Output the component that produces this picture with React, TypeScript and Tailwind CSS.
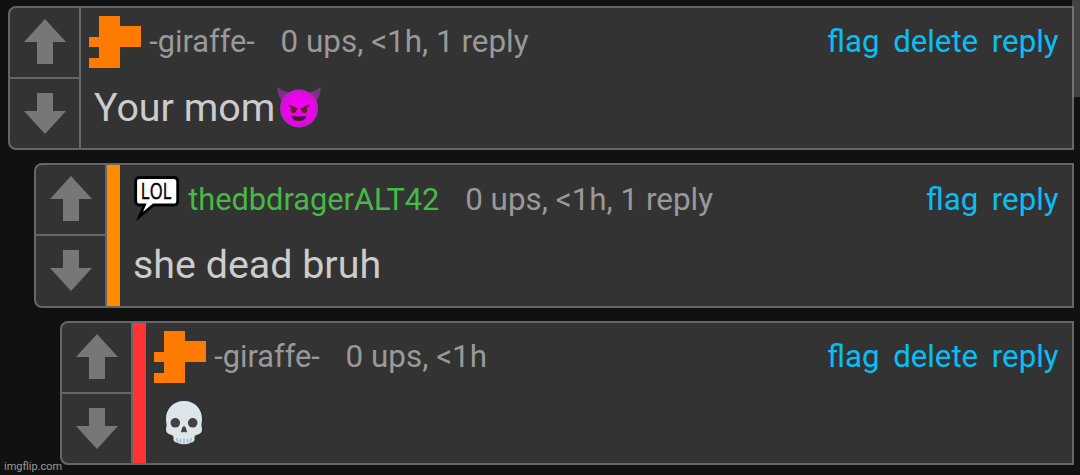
import type { ReactNode } from "react";

interface CommentProps {
    card: string;
    stripe?: string;
    icon: ReactNode;
    name: string;
    nameStyle: string;
    stats: string;
    actions: string[];
    headerPad?: string;
    children: ReactNode;
}

function GiraffeIcon() {
    return (
        <svg width="52" height="52" viewBox="0 0 52 52" shapeRendering="crispEdges" className="shrink-0">
            <path d="M10 0H31V10H52V31H31V52H0V42H10V31H0V21H10Z" fill="#ff7a00" />
        </svg>
    );
}

function LolIcon() {
    return (
        <svg width="52" height="52" viewBox="0 0 52 52" className="shrink-0 overflow-visible">
            <path
                d="M12 4.500H45.500Q49.700 4.500 49.700 8.500V28Q49.700 32 45.500 32H25.500L11.500 43.500L16.500 32H12Q7.700 32 7.700 28V8.500Q7.700 4.500 12 4.500Z"
                fill="#fff"
                stroke="#000"
                strokeWidth="2.800"
                strokeMiterlimit="8"
            />
            <text
                transform="translate(12.800 26.300) scale(0.740 1)"
                fontSize="22.500"
                letterSpacing="0.300"
                fontFamily="Open Sans, sans-serif"
                fill="#000"
                stroke="#000"
                strokeWidth="0.500"
            >
                LOL
            </text>
        </svg>
    );
}

function ImpIcon() {
    return (
        <svg width="44" height="44" viewBox="0 0 44 44" className="shrink-0">
            <defs>
                <radialGradient id="imp">
                    <stop offset="0.65" stopColor="#ef00ee" />
                    <stop offset="1" stopColor="#c21bca" />
                </radialGradient>
            </defs>
            <path d="M0.500 0.500Q4 5 12 6.500L6 17Q-0.500 9 0.500 0.500ZM43.500 0.500Q40 5 32 6.500L38 17Q44.500 9 43.500 0.500Z" fill="#7b3188" />
            <circle cx="22" cy="22.500" r="19" fill="url(#imp)" />
            <path d="M12 19.500L19.500 23M32 19.500L24.500 23" stroke="#4a1630" strokeWidth="1.800" strokeLinecap="round" />
            <circle cx="16.500" cy="24" r="2.900" fill="#5a2a18" />
            <circle cx="27.500" cy="24" r="2.900" fill="#5a2a18" />
            <path d="M14.500 29.800Q22 31 29.500 29.800Q28.500 35 22 35Q15.500 35 14.500 29.800Z" fill="#4a1630" />
        </svg>
    );
}

function SkullIcon() {
    return (
        <svg width="36" height="44" viewBox="0 0 36 44" className="shrink-0">
            <path
                d="M18 0C7 0 0 8 0 18C0 21 0.800 23 0.500 25C-0.300 28 -0.300 31 2 32.500C4 34 7 33.500 7.500 36V39Q8 41 10.500 41.500Q14 43.500 18 43.200Q22 43.500 25.500 41.500Q28 41 28.500 39V36C29 33.500 32 34 34 32.500C36.300 31 36.300 28 35.500 25C35.200 23 36 21 36 18C36 8 29 0 18 0Z"
                fill="#dce5ea"
            />
            <circle cx="9.300" cy="21.800" r="4.800" fill="#424242" />
            <circle cx="26.700" cy="21.800" r="4.800" fill="#424242" />
            <path d="M18 24.500Q15.200 27 15 30.500Q16.200 32.500 18 30.500Q19.800 32.500 21 30.500Q20.800 27 18 24.500Z" fill="#424242" />
            <path d="M10.500 37L12 41.500M18 37V43M25.500 37L24 41.500M14.500 38V41.500M21.500 38V41.500" stroke="#82b4c6" strokeWidth="1.100" />
        </svg>
    );
}

function VoteButtons() {
    return (
        <div className="flex w-[71px] shrink-0 flex-col border-r-2 border-[#666]">
            <button className="flex h-[71px] justify-center border-b-2 border-[#666] pt-[11px]">
                <svg width="42" height="45" viewBox="0 0 42 45">
                    <path d="M21 0L42 23H29V45H13V23H0Z" fill="#777" />
                </svg>
            </button>
            <button className="flex flex-1 justify-center pt-[14px]">
                <svg width="42" height="41" viewBox="0 0 42 41">
                    <path d="M13 0H29V18H42L21 41L0 18H13Z" fill="#777" />
                </svg>
            </button>
        </div>
    );
}

function Comment({ card, stripe, icon, name, nameStyle, stats, actions, headerPad = "pt-[10px]", children }: CommentProps) {
    return (
        <div className={`mr-[6px] flex rounded-l-lg border-2 border-[#666] bg-[#333] ${card}`}>
            <VoteButtons />
            {stripe && <div className={`w-[13px] shrink-0 ${stripe}`} />}
            <div className="min-w-0 flex-1 pt-2 pr-[13.5px] pl-2">
                <div className="flex h-[52px] items-start whitespace-nowrap">
                    {icon}
                    <div className={`flex flex-1 items-center ${headerPad}`}>
                        <span className={`ml-[8.2px] text-[30.75px] ${nameStyle}`}>{name}</span>
                        <span className="ml-[25.8px] text-[31.4px] text-[#999]">{stats}</span>
                        <div className="ml-auto flex gap-[13.7px] text-[31.2px] text-[#08bff5]">
                            {actions.map((action) => (
                                <a key={action}>{action}</a>
                            ))}
                        </div>
                    </div>
                </div>
                <div className="mt-[14px] flex h-[52px] items-center pl-[5px] text-[39.4px] text-[#ccc]">{children}</div>
            </div>
        </div>
    );
}

export default function App() {
    return (
        <div className="relative flex h-[475px] w-[1080px] flex-col gap-[13px] overflow-hidden bg-[#111] pt-[6px] font-['Roboto',sans-serif] text-[31px] leading-[31px]">
            <Comment
                card="ml-2 h-[144px]"
                icon={<GiraffeIcon />}
                name="-giraffe-"
                nameStyle="text-[#999]"
                stats="0 ups, <1h, 1 reply"
                actions={["flag", "delete", "reply"]}
            >
                <span className="pb-[2px]">Your mom</span>
                <span className="ml-[2px]">
                    <ImpIcon />
                </span>
            </Comment>
            <Comment
                card="ml-[34px] h-[145px]"
                stripe="bg-[#ff8c00]"
                icon={<LolIcon />}
                name="thedbdragerALT42"
                nameStyle="text-[#46b946]"
                stats="0 ups, <1h, 1 reply"
                actions={["flag", "reply"]}
                headerPad="pt-[11px]"
            >
                <span className="pb-[2px]">she dead bruh</span>
            </Comment>
            <Comment
                card="ml-[60px] h-[144px]"
                stripe="bg-[#ff3333]"
                icon={<GiraffeIcon />}
                name="-giraffe-"
                nameStyle="text-[#999]"
                stats="0 ups, <1h"
                actions={["flag", "delete", "reply"]}
            >
                <span className="ml-[7px]">
                    <SkullIcon />
                </span>
            </Comment>

            {/* Scrollbar thumb */}
            <div className="absolute top-0 right-0 h-[97px] w-2 bg-[#808080]/45" />
            {/* Watermark */}
            <div className="absolute bottom-[3px] left-1 text-[11px] leading-none text-[#999]">imgflip.com</div>
        </div>
    );
}
